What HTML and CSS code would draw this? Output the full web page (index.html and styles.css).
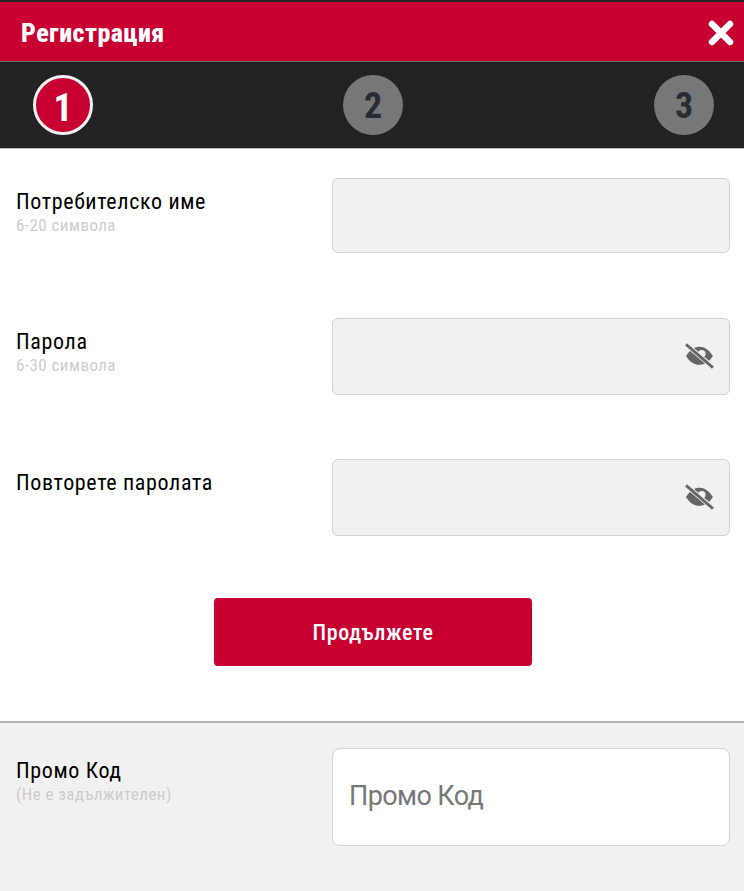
FILE: index.html
```html
<!DOCTYPE html>
<html lang="bg">
<head>
    <meta charset="UTF-8">
    <title>Регистрация</title>
    <link rel="stylesheet" href="styles.css">
</head>
<body>
    <header class="title-bar">
        <h1>Регистрация</h1>
        <svg class="close" width="26" height="26" viewBox="0 0 26 26">
            <path d="M4 4 L22 22 M22 4 L4 22" stroke="#fff" stroke-width="6.5" stroke-linecap="round"/>
        </svg>
    </header>
    <div class="steps">
        <span class="step active">1</span>
        <span class="step">2</span>
        <span class="step">3</span>
    </div>
    <main class="form">
        <div class="row row-user">
            <div class="label">
                <div class="name">Потребителско име</div>
                <div class="hint">6-20 символа</div>
            </div>
            <div class="field field-user"></div>
        </div>
        <div class="row row-pass">
            <div class="label">
                <div class="name">Парола</div>
                <div class="hint">6-30 символа</div>
            </div>
            <div class="field">
                <svg class="eye" width="30" height="26" viewBox="0 0 32 28">
                    <path d="M2 14 C7 6 12 4 16.500 4 C22 4 27 7.500 31 14 C27 20.500 22 23.500 16 23.500 C11 23.500 6 20.500 2 14 Z M19 7.500 A4 4 0 1 0 19 15.500 A4 4 0 1 0 19 7.500 Z" fill="#666" fill-rule="evenodd"/>
                    <path d="M2 1.500 L31 26" stroke="#f1f1f1" stroke-width="5"/>
                    <path d="M2 1.500 L31 26.500" stroke="#666" stroke-width="3"/>
                </svg>
            </div>
        </div>
        <div class="row row-repeat">
            <div class="label">
                <div class="name">Повторете паролата</div>
            </div>
            <div class="field">
                <svg class="eye" width="30" height="26" viewBox="0 0 32 28">
                    <path d="M2 14 C7 6 12 4 16.500 4 C22 4 27 7.500 31 14 C27 20.500 22 23.500 16 23.500 C11 23.500 6 20.500 2 14 Z M19 7.500 A4 4 0 1 0 19 15.500 A4 4 0 1 0 19 7.500 Z" fill="#666" fill-rule="evenodd"/>
                    <path d="M2 1.500 L31 26" stroke="#f1f1f1" stroke-width="5"/>
                    <path d="M2 1.500 L31 26.500" stroke="#666" stroke-width="3"/>
                </svg>
            </div>
        </div>
        <div class="actions">
            <button class="next">Продължете</button>
        </div>
    </main>
    <section class="promo">
        <div class="label">
            <div class="name">Промо Код</div>
            <div class="hint">(Не е задължителен)</div>
        </div>
        <input class="promo-input" type="text" placeholder="Промо Код">
    </section>
</body>
</html>
```

FILE: styles.css
```css
body {
    margin: 0;
    padding: 0;
    font-family: Roboto, "Liberation Sans", sans-serif;
    font-stretch: 75%;
    background-color: #fff;
    height: 891px;
    overflow: hidden;
}
.title-bar {
    box-sizing: border-box;
    height: 62px;
    border-top: 2px solid #222;
    border-bottom: 1px solid #6b6b6b;
    background-color: #c80032;
    display: flex;
    align-items: center;
    justify-content: space-between;
    padding: 3px 10px 0 21px;
}
.title-bar h1 {
    margin: 0;
    color: #fff;
    font-size: 26px;
    font-weight: 800;
    letter-spacing: 0.45px;
}
.close {
    display: block;
}
.steps {
    height: 86px;
    border-bottom: 1px solid #bbb;
    background-color: #222224;
    display: flex;
    align-items: center;
    justify-content: space-between;
    padding: 0 30px 0 33px;
}
.step {
    box-sizing: border-box;
    width: 60px;
    height: 60px;
    padding-top: 2px;
    border-radius: 50%;
    background-color: #777;
    color: #2b2b33;
    font-size: 36px;
    font-weight: 700;
    display: flex;
    align-items: center;
    justify-content: center;
}
.step:nth-child(2) {
    margin-right: 1px;
}
.step.active {
    padding-top: 6px;
    border: 3px solid #f2f2f2;
    background-color: #c80032;
    color: #fff;
    font-size: 38px;
}
.form {
    height: 572px;
    box-sizing: border-box;
    padding: 29px 14px 0 16px;
}
.row {
    display: flex;
    justify-content: space-between;
    align-items: flex-start;
}
.row-user {
    margin-bottom: 65px;
}
.row-pass {
    margin-bottom: 64px;
}
.row-repeat {
    margin-bottom: 62px;
}
.label {
    padding-top: 10px;
}
.name {
    color: #000;
    font-size: 22px;
    letter-spacing: 0.65px;
    line-height: 27px;
}
.hint {
    color: #ccc;
    font-size: 17px;
    letter-spacing: 0.45px;
    line-height: 20px;
}
.field {
    width: 398px;
    height: 77px;
    box-sizing: border-box;
    border: 1px solid #d2d2d2;
    border-radius: 6px;
    background-color: #f1f1f1;
    display: flex;
    align-items: center;
    justify-content: flex-end;
    padding: 0 15px 2px 0;
}
.field-user {
    height: 75px;
}
.actions {
    display: flex;
    justify-content: center;
}
.next {
    width: 318px;
    height: 68px;
    border: 0;
    border-radius: 4px;
    background-color: #c80032;
    color: #fff;
    font-family: inherit;
    font-stretch: inherit;
    font-size: 22px;
    font-weight: 500;
    letter-spacing: 0.6px;
}
.promo {
    height: 170px;
    box-sizing: border-box;
    border-top: 2px solid #b4b4b4;
    background-color: #f1f1f1;
    padding: 25px 14px 0 16px;
    display: flex;
    justify-content: space-between;
    align-items: flex-start;
}
.promo .label {
    padding-top: 9px;
}
.promo-input {
    width: 398px;
    height: 98px;
    box-sizing: border-box;
    border: 1px solid #d2d2d2;
    border-radius: 8px;
    background-color: #fff;
    padding: 0 0 3px 16px;
    font-family: inherit;
    font-stretch: 100%;
    font-size: 27px;
    letter-spacing: -0.6px;
    outline: none;
}
.promo-input::placeholder {
    color: #777;
    opacity: 1;
}
```
